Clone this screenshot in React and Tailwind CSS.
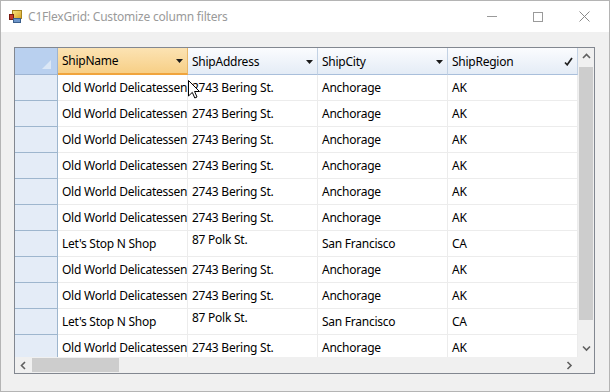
import React from "react";

const rows = [
  ["Old World Delicatessen", "2743 Bering St.", "Anchorage", "AK", false],
  ["Old World Delicatessen", "2743 Bering St.", "Anchorage", "AK", false],
  ["Old World Delicatessen", "2743 Bering St.", "Anchorage", "AK", false],
  ["Old World Delicatessen", "2743 Bering St.", "Anchorage", "AK", false],
  ["Old World Delicatessen", "2743 Bering St.", "Anchorage", "AK", false],
  ["Old World Delicatessen", "2743 Bering St.", "Anchorage", "AK", false],
  ["Let's Stop N Shop", "87 Polk St.", "San Francisco", "CA", true],
  ["Old World Delicatessen", "2743 Bering St.", "Anchorage", "AK", false],
  ["Old World Delicatessen", "2743 Bering St.", "Anchorage", "AK", false],
  ["Let's Stop N Shop", "87 Polk St.", "San Francisco", "CA", true],
  ["Old World Delicatessen", "2743 Bering St.", "Anchorage", "AK", false],
];

function Arrow() {
  return (
    <svg width="7" height="4" viewBox="0 0 7 4" className="shrink-0">
      <path d="M0 0H7L3.5 4Z" fill="#1a1a1a" />
    </svg>
  );
}

function Header({ label, active, check }) {
  return (
    <div
      className={
        "h-[27px] flex items-center pl-[4px] pr-[4px] pt-[1px] border-r " +
        (active
          ? "bg-gradient-to-b from-[#fce3b3] to-[#f7cf86] border-b-2 border-b-[#f0a43c] border-r-[#e9b86a]"
          : "bg-gradient-to-b from-[#fbfcfe] to-[#e4ecf6] border-b border-b-[#a9bfdb] border-r-[#c3d2e4]")
      }
    >
      <span className="flex-1 text-[12px] text-black leading-none tracking-[-0.25px]">{label}</span>
      {check ? (
        <svg width="9" height="9" viewBox="0 0 9 9">
          <path d="M1 5.5L3.2 7.8L8 1" stroke="#222" strokeWidth="1.7" fill="none" />
        </svg>
      ) : (
        <Arrow />
      )}
    </div>
  );
}

function Chevron({ dir }) {
  const d = {
    up: "M1 5L4.5 1.5L8 5",
    down: "M1 1.5L4.5 5L8 1.5",
    left: "M5 1L1.5 4.5L5 8",
    right: "M1.5 1L5 4.5L1.5 8",
  }[dir];
  const horiz = dir === "left" || dir === "right";
  return (
    <svg width={horiz ? 7 : 9} height={horiz ? 9 : 7} viewBox={horiz ? "0 0 7 9" : "0 0 9 7"}>
      <path d={d} stroke="#606060" strokeWidth="1.6" fill="none" />
    </svg>
  );
}

const cell =
  "h-[26px] flex pl-[4px] pt-[1px] border-r border-b border-[#ececec] text-[12px] tracking-[-0.25px] text-black whitespace-nowrap overflow-hidden";

export default function App() {
  return (
    <div
      className="w-[610px] h-[392px] bg-white relative overflow-hidden flex flex-col border border-[#b4b4b4]"
      style={{ fontFamily: '"Segoe UI", "Noto Sans", "Open Sans", sans-serif' }}
    >
      {/* Title bar */}
      <div className="h-[31px] flex items-center bg-white shrink-0">
        <div className="ml-[8px] w-[13px] h-[13px] relative">
          <div className="absolute left-[3px] top-0 w-[10px] h-[9px] bg-gradient-to-br from-[#f6e27a] to-[#d9a520] border border-[#a68420]" />
          <div className="absolute left-0 top-[4px] w-[5px] h-[6px] bg-[#c63a2a] border border-[#7a1a10]" />
          <div className="absolute left-[4px] top-[8px] w-[8px] h-[5px] bg-[#6d95c9] border border-[#3b5f8c]" />
        </div>
        <span className="ml-[6px] text-[12px] text-[#9a9a9a] leading-none tracking-[-0.2px]">C1FlexGrid: Customize column filters</span>
        <div className="flex-1" />
        <div className="w-[46px] h-[30px] flex items-center justify-center">
          <div className="w-[10px] h-px bg-[#9a9a9a]" />
        </div>
        <div className="w-[46px] h-[30px] flex items-center justify-center">
          <div className="w-[10px] h-[10px] border border-[#9a9a9a]" />
        </div>
        <div className="w-[46px] h-[30px] flex items-center justify-center mr-[2px]">
          <svg width="11" height="11" viewBox="0 0 11 11">
            <path d="M0.5 0.5L10.5 10.5M10.5 0.5L0.5 10.5" stroke="#8a8a8a" strokeWidth="1" />
          </svg>
        </div>
      </div>

      {/* Client area */}
      <div className="flex-1 bg-[#f0f0f0] pl-[13px] pt-[15px]">
        <div className="w-[581px] h-[327px] border border-[#828790] bg-white flex flex-col">
          <div className="flex flex-1 min-h-0">
            {/* Grid */}
            <div className="w-[563px] overflow-hidden flex flex-col">
              <div className="grid grid-cols-[43px_130px_130px_130px_130px] shrink-0">
                <div className="h-[27px] bg-[#b9d0ef] border-r border-b border-[#9db4d2] relative">
                  <svg width="9" height="9" viewBox="0 0 9 9" className="absolute right-[6px] bottom-[5px]">
                    <path d="M9 0V9H0Z" fill="#dbe7f6" />
                  </svg>
                </div>
                <Header label="ShipName" active />
                <Header label="ShipAddress" />
                <Header label="ShipCity" />
                <Header label="ShipRegion" check />
              </div>
              {rows.map((r, i) => (
                <div key={i} className="grid grid-cols-[43px_130px_130px_130px_130px] shrink-0">
                  <div className="h-[26px] bg-[#e4ecf7] border-r border-b border-[#9eb6ce]" />
                  <div className={cell + " items-center"}>{r[0]}</div>
                  <div className={cell + (r[4] ? " items-start !pt-[0px]" : " items-center")}>{r[1]}</div>
                  <div className={cell + " items-center"}>{r[2]}</div>
                  <div className={cell + " items-center"}>{r[3]}</div>
                </div>
              ))}
            </div>
            {/* Vertical scrollbar */}
            <div className="w-[16px] bg-[#f0f0f0] flex flex-col items-center">
              <div className="h-[17px] flex items-center justify-center">
                <Chevron dir="up" />
              </div>
              <div className="flex-1 w-full px-[1px] pt-[2px] pb-[20px]">
                <div className="w-full h-full bg-[#cdcdcd]" />
              </div>
              <div className="h-[17px] flex items-center justify-center">
                <Chevron dir="down" />
              </div>
            </div>
          </div>
          {/* Horizontal scrollbar */}
          <div className="h-[16px] flex shrink-0">
            <div className="w-[563px] bg-[#f0f0f0] flex items-center">
              <div className="w-[17px] flex items-center justify-center">
                <Chevron dir="left" />
              </div>
              <div className="w-[87px] h-[14px] bg-[#cdcdcd]" />
              <div className="flex-1" />
              <div className="w-[17px] flex items-center justify-center">
                <Chevron dir="right" />
              </div>
            </div>
            <div className="w-[16px] bg-[#f0f0f0]" />
          </div>
        </div>
      </div>

      {/* Mouse cursor */}
      <svg width="12" height="19" viewBox="0 0 12 19" className="absolute left-[187px] top-[79px]">
        <path d="M0.5 0.5V16L4.3 12.4L6.8 18L9 17L6.6 11.5H11.5Z" fill="white" stroke="black" strokeWidth="1" />
      </svg>
    </div>
  );
}
